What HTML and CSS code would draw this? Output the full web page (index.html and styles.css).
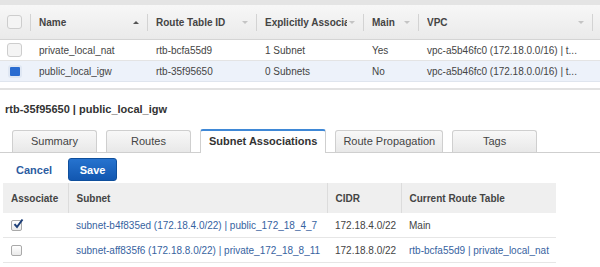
FILE: index.html
```html
<!DOCTYPE html>
<html lang="en">
<head>
    <meta charset="UTF-8">
    <title>Route Tables</title>
    <link rel="stylesheet" href="styles.css">
</head>
<body>
    <div class="strip"></div>
    <table class="grid">
        <colgroup>
            <col style="width:30px">
            <col style="width:117px">
            <col style="width:109px">
            <col style="width:107px">
            <col style="width:55px">
            <col style="width:174px">
            <col style="width:8px">
        </colgroup>
        <thead>
            <tr>
                <th class="sel"><span class="box"></span></th>
                <th><div class="hd"><span class="lbl">Name</span><span class="sort up"></span></div></th>
                <th><div class="hd"><span class="lbl">Route Table ID</span><span class="sort"></span></div></th>
                <th><div class="hd"><span class="lbl">Explicitly Associated With</span><span class="sort"></span></div></th>
                <th><div class="hd"><span class="lbl">Main</span><span class="sort"></span></div></th>
                <th><div class="hd"><span class="lbl">VPC</span><span class="sort"></span></div></th>
                <th></th>
            </tr>
        </thead>
        <tbody>
            <tr>
                <td class="sel"><span class="box"></span></td>
                <td>private_local_nat</td>
                <td>rtb-bcfa55d9</td>
                <td>1 Subnet</td>
                <td>Yes</td>
                <td>vpc-a5b46fc0 (172.18.0.0/16) | t...</td>
                <td></td>
            </tr>
            <tr class="picked">
                <td class="sel"><span class="box on"></span></td>
                <td>public_local_igw</td>
                <td>rtb-35f95650</td>
                <td>0 Subnets</td>
                <td>No</td>
                <td>vpc-a5b46fc0 (172.18.0.0/16) | t...</td>
                <td></td>
            </tr>
        </tbody>
    </table>

    <div class="divider"></div>

    <h2 class="title">rtb-35f95650 | public_local_igw</h2>

    <ul class="tabs">
        <li class="tab">Summary</li>
        <li class="tab">Routes</li>
        <li class="tab on">Subnet Associations</li>
        <li class="tab">Route Propagation</li>
        <li class="tab">Tags</li>
    </ul>

    <div class="actions">
        <a class="cancel">Cancel</a>
        <button class="save">Save</button>
    </div>

    <table class="assoc">
        <colgroup>
            <col style="width:65px">
            <col style="width:259px">
            <col style="width:74px">
            <col style="width:155px">
        </colgroup>
        <thead>
            <tr>
                <th>Associate</th>
                <th>Subnet</th>
                <th>CIDR</th>
                <th>Current Route Table</th>
            </tr>
        </thead>
        <tbody>
            <tr>
                <td><span class="chk on"><svg width="12" height="12" viewBox="0 0 12 12"><path d="M2.5 6.2 L5 9 L10.5 1.5" fill="none" stroke="#1d3f78" stroke-width="2"/></svg></span></td>
                <td><a class="link">subnet-b4f835ed (172.18.4.0/22) | public_172_18_4_7</a></td>
                <td>172.18.4.0/22</td>
                <td>Main</td>
            </tr>
            <tr>
                <td><span class="chk"></span></td>
                <td><a class="link">subnet-aff835f6 (172.18.8.0/22) | private_172_18_8_11</a></td>
                <td>172.18.8.0/22</td>
                <td><a class="link">rtb-bcfa55d9 | private_local_nat</a></td>
            </tr>
        </tbody>
    </table>
</body>
</html>
```

FILE: styles.css
```css
html,body{
    margin:0;
    background:#fff;
}
body{
    width:600px;
    height:267px;
    overflow:hidden;
    font-family:"Liberation Sans",Arial,sans-serif;
    font-size:10px;
    color:#444;
}
.strip{
    height:5px;
    background:#e4e4e4;
}

/* top grid */
.grid{
    width:600px;
    border-collapse:collapse;
    table-layout:fixed;
}
.grid th{
    position:relative;
    height:34px;
    padding:0 8px 0 9px;
    background:linear-gradient(#f7f7f7,#eaeaea);
    border-bottom:1px solid #d4d4d4;
    text-align:left;
    font-weight:bold;
    color:#444;
}
.grid th::before{
    content:"";
    position:absolute;
    left:0;
    top:9px;
    bottom:8px;
    border-left:1px solid #d3d3d3;
}
.grid th:first-child::before{
    display:none;
}
.grid td{
    height:20px;
    padding:0 9px;
    border-bottom:1px solid #e4e4e4;
    white-space:nowrap;
    overflow:hidden;
}
.grid .sel{
    padding:0 0 0 7px;
}
.grid .picked td{
    background:#edf2fa;
    border-bottom-color:#dfe5ee;
}
.hd{
    display:flex;
    align-items:center;
}
.lbl{
    flex:1;
    overflow:hidden;
    white-space:nowrap;
}
.sort{
    width:0;
    height:0;
    margin-left:2px;
    border-left:3px solid transparent;
    border-right:3px solid transparent;
    border-top:3px solid #c4c4c4;
}
.sort.up{
    border-top:0;
    border-bottom:3px solid #555;
}
.box{
    display:block;
    box-sizing:border-box;
    width:15px;
    height:14px;
    border:1px solid #cdcdcd;
    border-radius:3px;
    background:#f4f4f4;
}
.box.on{
    width:14px;
    height:13px;
    margin-left:1px;
    border:2px solid #dfe7f3;
    background:#2a6cd0;
}

.divider{
    height:2px;
    margin-top:6px;
    background:#e2e2e2;
}
.title{
    margin:11px 0 0 5px;
    font-size:11px;
    line-height:16px;
    font-weight:bold;
    color:#333;
}

/* tabs */
.tabs{
    display:flex;
    align-items:flex-end;
    gap:9px;
    height:23px;
    margin:12px 0 0;
    padding:0 0 0 12px;
    list-style:none;
    border-bottom:1px solid #cfcfcf;
}
.tab{
    box-sizing:border-box;
    min-width:85px;
    height:22px;
    padding:0 7px;
    border:1px solid #cfcfcf;
    border-bottom:0;
    border-radius:3px 3px 0 0;
    background:linear-gradient(#f8f8f8,#e8e8e8);
    font-size:11px;
    line-height:21px;
    text-align:center;
    color:#444;
}
.tab.on{
    height:24px;
    margin-bottom:-1px;
    padding:0 8px;
    border-top:2px solid #3f88d6;
    background:#fff;
    font-weight:bold;
    color:#333;
}

.actions{
    display:flex;
    align-items:center;
    gap:16px;
    margin:5px 0 0 16px;
}
.cancel{
    font-size:11px;
    font-weight:bold;
    color:#2c5c9f;
}
.save{
    width:49px;
    height:23px;
    padding:0;
    border:1px solid #0f4f9c;
    border-radius:3px;
    background:linear-gradient(#2673cf,#1257b0);
    font-family:inherit;
    font-size:11px;
    font-weight:bold;
    color:#fff;
}

/* subnet associations */
.assoc{
    width:553px;
    margin:2px 0 0 3px;
    border-collapse:collapse;
    table-layout:fixed;
}
.assoc th{
    height:30px;
    padding:0 8px;
    background:#efefef;
    border-left:1px solid #dcdcdc;
    text-align:left;
    font-weight:bold;
    color:#444;
}
.assoc th:first-child{
    border-left:0;
}
.assoc td{
    height:24px;
    padding:0 8px;
    border-bottom:1px solid #e6e6e6;
    white-space:nowrap;
    overflow:hidden;
}
.link{
    color:#37639f;
}
.chk{
    position:relative;
    display:block;
    box-sizing:border-box;
    width:11px;
    height:11px;
    border:1px solid #a9a9a9;
    border-radius:2px;
    background:linear-gradient(#fff,#eaeaea);
}
.chk svg{
    position:absolute;
    left:0;
    top:-3px;
}
```
